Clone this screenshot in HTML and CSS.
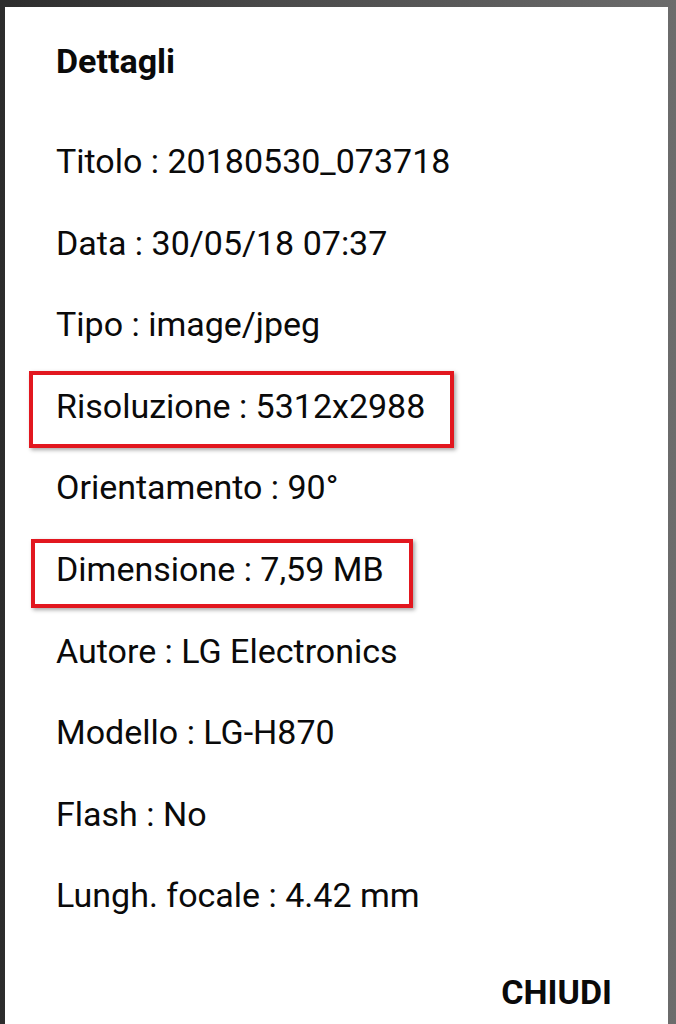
FILE: index.html
```html
<!DOCTYPE html>
<html lang="it">
<head>
<meta charset="utf-8">
<title>Dettagli</title>
<link rel="stylesheet" href="styles.css">
</head>
<body>
<div class="dialog">
  <h1 class="title">Dettagli</h1>
  <ul class="details">
    <li class="row">Titolo : 20180530_073718</li>
    <li class="row">Data : 30/05/18 07:37</li>
    <li class="row">Tipo : image/jpeg</li>
    <li class="row"><span class="mark mark-res"></span>Risoluzione : 5312x2988</li>
    <li class="row">Orientamento : 90°</li>
    <li class="row"><span class="mark mark-size"></span>Dimensione : 7,59 MB</li>
    <li class="row">Autore : LG Electronics</li>
    <li class="row">Modello : LG-H870</li>
    <li class="row">Flash : No</li>
    <li class="row">Lungh. focale : 4.42 mm</li>
  </ul>
  <div class="actions">
    <span class="btn">CHIUDI</span>
  </div>
</div>
</body>
</html>
```

FILE: styles.css
```css
html, body {
  margin: 0;
  padding: 0;
  height: 100%;
}
body {
  background: linear-gradient(to right, #2c2c2c 0%, #4a4a4a 40%, #6c6c6c 100%);
  font-family: Roboto, "Liberation Sans", Arial, sans-serif;
  color: #0a0a0a;
  overflow: hidden;
}
.dialog {
  margin: 7px 8px 0 5px;
  height: calc(100% - 7px);
  background: #fff;
  box-sizing: border-box;
  padding: 34px 56px 0 51px;
  display: flex;
  flex-direction: column;
}
.title {
  margin: 0 0 60px 0;
  font-size: 34px;
  line-height: 40px;
  font-weight: 700;
}
.details {
  list-style: none;
  margin: 0;
  padding: 0;
  display: flex;
  flex-direction: column;
  gap: 41.6px;
}
.row {
  position: relative;
  font-size: 34px;
  line-height: 40px;
  white-space: nowrap;
}
.mark {
  position: absolute;
  border: 4px solid #e2171f;
  box-sizing: border-box;
  box-shadow: 2px 2px 4px rgba(0, 0, 0, 0.35);
  pointer-events: none;
}
.mark-res {
  left: -27px;
  top: -15px;
  width: 425px;
  height: 77px;
}
.mark-size {
  left: -25px;
  top: -10px;
  width: 382px;
  height: 69px;
}
.actions {
  display: flex;
  justify-content: flex-end;
  margin-top: 57px;
}
.btn {
  font-size: 34px;
  line-height: 40px;
  font-weight: 700;
}
```
